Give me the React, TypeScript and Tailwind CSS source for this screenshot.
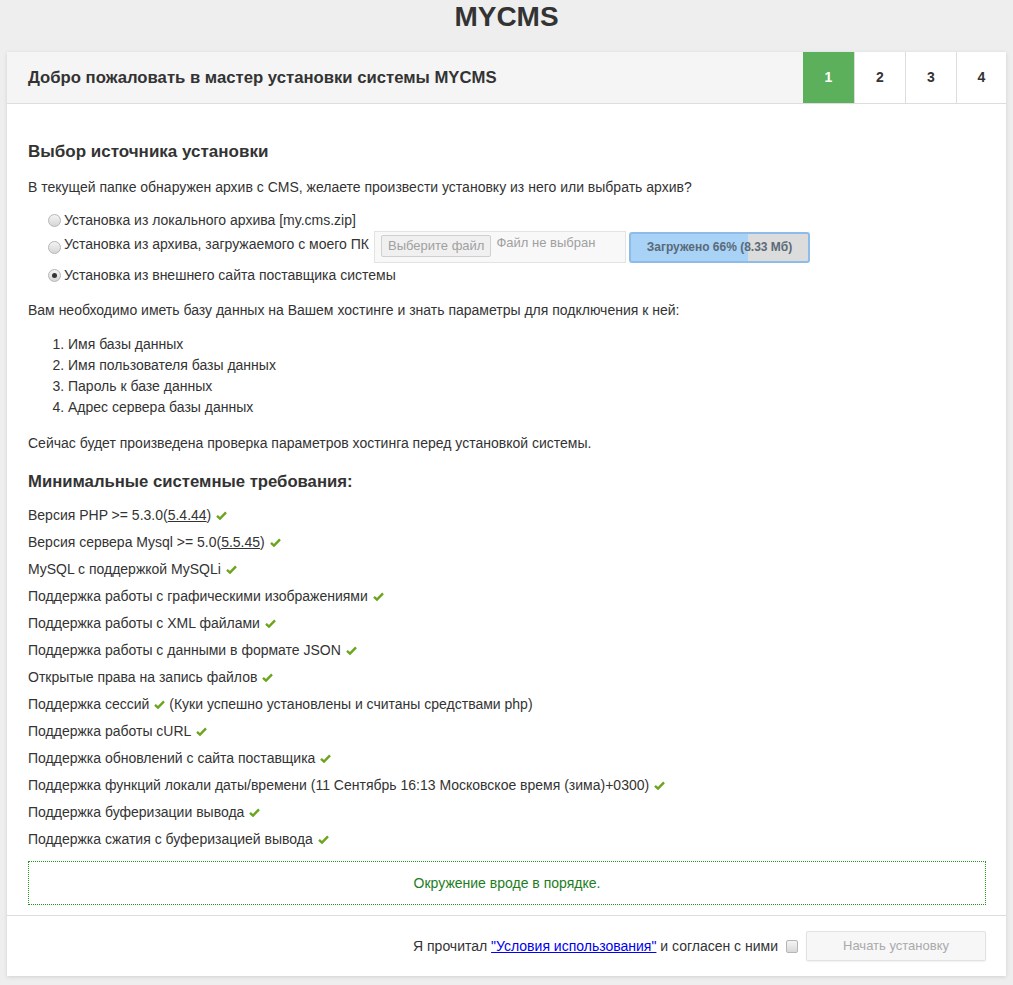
const reqs: { text: React.ReactNode; extra?: string }[] = [
  { text: <>Версия PHP &gt;= 5.3.0(<span className="underline">5.4.44</span>)</> },
  { text: <>Версия сервера Mysql &gt;= 5.0(<span className="underline">5.5.45</span>)</> },
  { text: "MySQL с поддержкой MySQLi" },
  { text: "Поддержка работы с графическими изображениями" },
  { text: "Поддержка работы с XML файлами" },
  { text: "Поддержка работы с данными в формате JSON" },
  { text: "Открытые права на запись файлов" },
  { text: "Поддержка сессий", extra: "(Куки успешно установлены и считаны средствами php)" },
  { text: "Поддержка работы cURL" },
  { text: "Поддержка обновлений с сайта поставщика" },
  { text: "Поддержка функций локали даты/времени (11 Сентябрь 16:13 Московское время (зима)+0300)" },
  { text: "Поддержка буферизации вывода" },
  { text: "Поддержка сжатия с буферизацией вывода" },
];

function Check() {
  return (
    <svg width="11" height="9" viewBox="0 0 11 9" className="inline-block ml-[5px] align-[0px]">
      <path d="M1 4.8 L4 7.6 L10 1.4" fill="none" stroke="#6aa51b" strokeWidth="2.4" />
    </svg>
  );
}

function Radio({ checked }: { checked?: boolean }) {
  return (
    <span className="inline-flex items-center justify-center w-[13px] h-[13px] rounded-full border border-[#b5b5b5] bg-gradient-to-b from-[#f4f4f4] to-[#d6d6d6] mr-[3px] shrink-0">
      {checked && <span className="w-[5px] h-[5px] rounded-full bg-[#333]" />}
    </span>
  );
}

export default function App() {
  return (
    <div className="min-h-[985px] bg-[#eeeeee] text-[#333] font-['Liberation_Sans',Arial,sans-serif] text-[14px]">
      <div className="text-center font-bold text-[28px] leading-[34px] text-[#333]">MYCMS</div>

      <div className="mx-auto mt-[18px] w-[999px] bg-white shadow-[0_1px_4px_rgba(0,0,0,0.12)]">
        {/* header */}
        <div className="flex h-[52px] bg-[#f5f5f5] border-b border-[#dddddd]">
          <div className="flex-1 flex items-center pl-[21px] font-bold text-[16.7px]">
            Добро пожаловать в мастер установки системы MYCMS
          </div>
          <div className="w-[51px] flex items-center justify-center bg-[#5cb05c] text-white font-bold text-[14px]">1</div>
          <div className="w-[51px] flex items-center justify-center bg-white border-l border-[#dddddd] font-bold text-[14px]">2</div>
          <div className="w-[51px] flex items-center justify-center bg-white border-l border-[#dddddd] font-bold text-[14px]">3</div>
          <div className="w-[50px] flex items-center justify-center bg-white border-l border-[#dddddd] font-bold text-[14px]">4</div>
        </div>

        {/* body */}
        <div className="pl-[21px] pr-[20px] pt-[36px] pb-[10px]">
          <div className="font-bold text-[17px] leading-[24px]">Выбор источника установки</div>
          <p className="mt-[13px] leading-[20px]">
            В текущей папке обнаружен архив с CMS, желаете произвести установку из него или выбрать архив?
          </p>

          <div className="pl-[20px] mt-[12px]">
            <div className="flex items-center h-[22px]">
              <Radio />
              <span>Установка из локального архива [my.cms.zip]</span>
            </div>
            <div className="flex items-center h-[32px]">
              <Radio />
              <span className="mb-[5px] flex items-center"><span>Установка из архива, загружаемого с моего ПК</span></span>
              <div className="ml-[5px] w-[252px] h-[32px] border border-[#e3e3e3] bg-[#f8f8f8] flex items-start pt-[3px] pl-[6px]">
                <div className="h-[22px] px-[6px] flex items-center border border-[#cfcfcf] rounded-[2px] bg-[#f0f0f0] text-[#a0a0a0] text-[13px]">
                  Выберите файл
                </div>
                <span className="ml-[5px] text-[#a0a0a0] text-[13px] leading-[16px]">Файл не выбран</span>
              </div>
              <div className="ml-[3px] w-[181px] h-[31px] rounded-[3px] border-2 border-[#8ebce9] bg-[linear-gradient(to_right,#a8d2f6_0%,#a8d2f6_66%,#dcdcdc_66%,#dcdcdc_100%)] flex items-center justify-center text-[12px] font-bold text-[#5a6a78]">
                Загружено 66% (8.33 Мб)
              </div>
            </div>
            <div className="flex items-center h-[22px] mt-[1px]">
              <Radio checked />
              <span>Установка из внешнего сайта поставщика системы</span>
            </div>
          </div>

          <p className="mt-[14px] leading-[20px]">
            Вам необходимо иметь базу данных на Вашем хостинге и знать параметры для подключения к ней:
          </p>
          <ol className="mt-[14px] pl-[40px] list-decimal leading-[21px]">
            <li>Имя базы данных</li>
            <li>Имя пользователя базы данных</li>
            <li>Пароль к базе данных</li>
            <li>Адрес сервера базы данных</li>
          </ol>
          <p className="mt-[15px] leading-[20px]">
            Сейчас будет произведена проверка параметров хостинга перед установкой системы.
          </p>

          <div className="mt-[17px] font-bold text-[16.7px] leading-[24px]">Минимальные системные требования:</div>
          <div className="mt-[8px]">
            {reqs.map((r, i) => (
              <div key={i} className="leading-[27px]">
                {r.text}
                <Check />
                {r.extra && <span> {r.extra}</span>}
              </div>
            ))}
          </div>

          <div className="mt-[8px] h-[44px] border border-dotted border-[#1c9a1c] flex items-center justify-center text-[#1e7d1e]">
            Окружение вроде в порядке.
          </div>
        </div>

        {/* footer */}
        <div className="border-t border-[#dddddd] h-[61px] flex items-center justify-end pr-[20px]">
          <span>
            Я прочитал <a href="#" className="text-[#0000ee] underline">"Условия использования"</a> и согласен с ними
          </span>
          <span className="ml-[8px] w-[12px] h-[13px] rounded-[2px] border border-[#b5b5b5] bg-gradient-to-b from-[#f4f4f4] to-[#d9d9d9]" />
          <button className="ml-[8px] w-[180px] h-[30px] border border-[#e2e2e2] rounded-[2px] bg-[#f7f7f7] text-[#aaaaaa] text-[13px] shadow-[0_1px_2px_rgba(0,0,0,0.06)]">
            Начать установку
          </button>
        </div>
      </div>
    </div>
  );
}
